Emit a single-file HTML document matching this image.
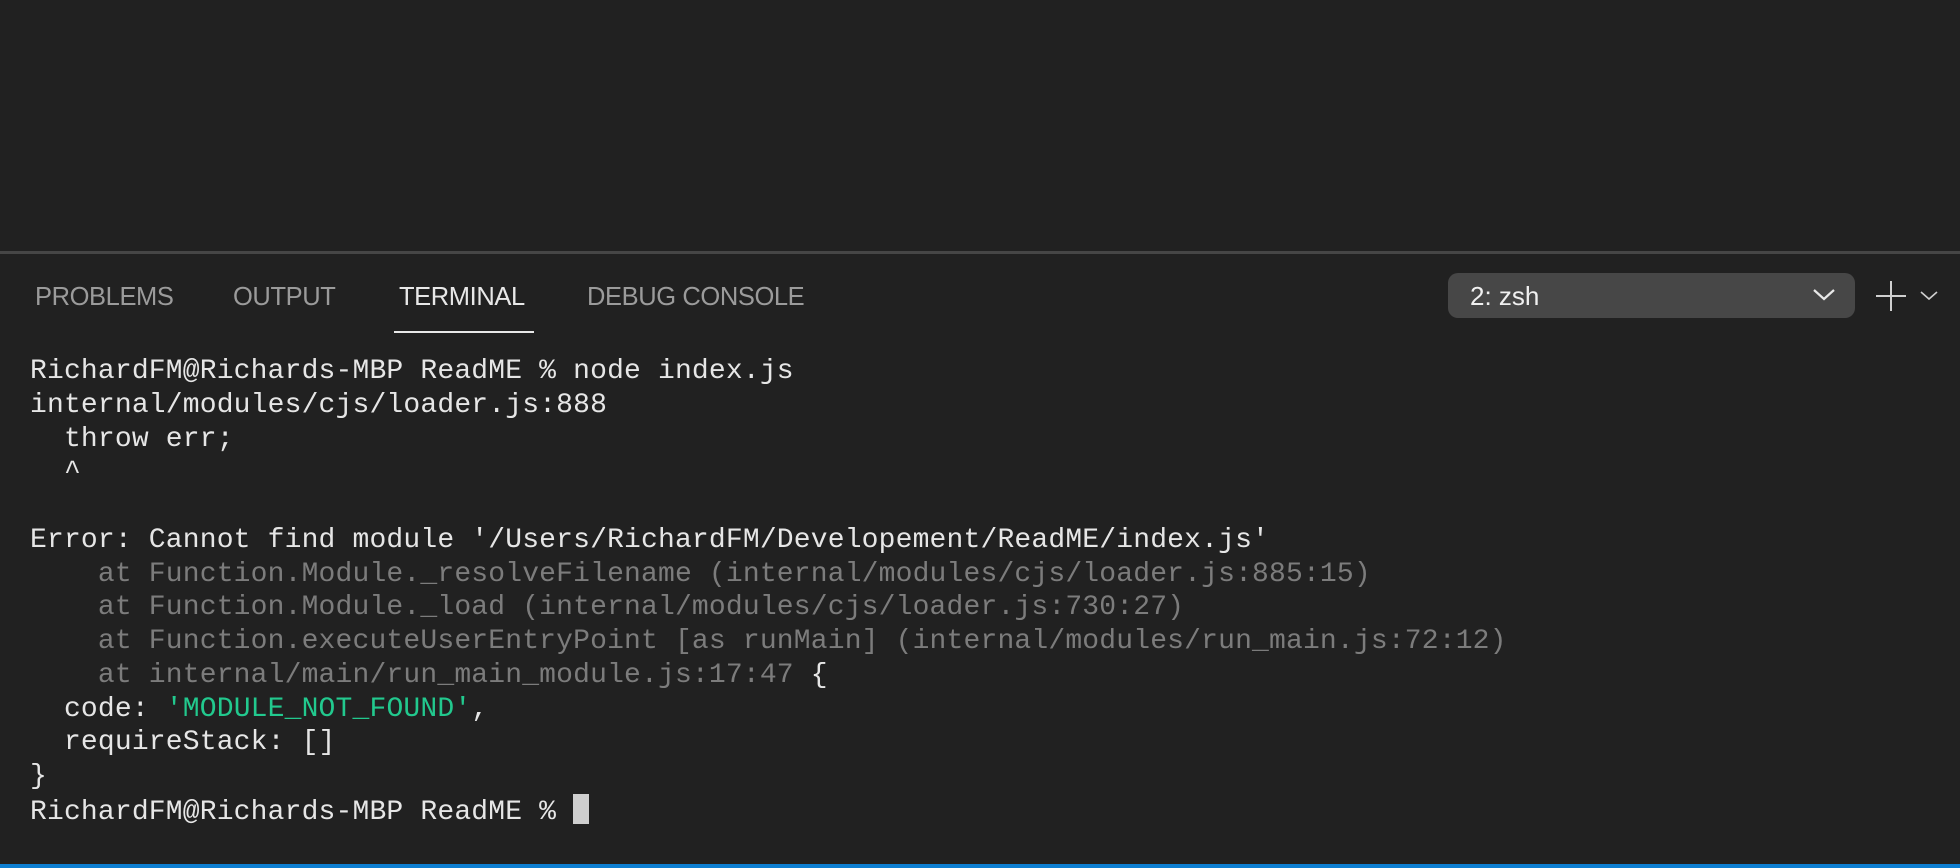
<!DOCTYPE html>
<html><head><meta charset="utf-8"><style>
html,body{margin:0;padding:0;width:1960px;height:868px;background:#212121;overflow:hidden}
body{position:relative;font-family:"Liberation Sans",sans-serif}
.sep{position:absolute;left:0;top:251px;width:1960px;height:3px;background:#464646}
.tab{position:absolute;top:281px;font-size:25.5px;color:#9b9b9b;line-height:32px;letter-spacing:-0.4px}
.ul{position:absolute;left:394px;top:331px;width:140px;height:2px;background:#e8e8e8}
.dd{position:absolute;left:1448px;top:273px;width:407px;height:45px;background:#474747;border-radius:10px}
.dd span{position:absolute;left:22px;top:7px;font-size:26px;color:#f0f0f0;line-height:32px}
.term{position:absolute;left:30px;top:355px;font-family:"Liberation Mono",monospace;font-size:28px;letter-spacing:0.17px;line-height:33.75px;color:#e6e6e6;white-space:pre}
.g{color:#7c7c7c}.gr{color:#22c98e}
.cur{display:inline-block;width:16px;height:30px;background:#cfcfcf;vertical-align:-5px}
.blue{position:absolute;left:0;top:864px;width:1960px;height:4px;background:#0e7fd1}
</style></head><body>
<div class="sep"></div>
<div class="tab" style="left:35px">PROBLEMS</div>
<div class="tab" style="left:233px">OUTPUT</div>
<div class="tab" style="left:399px;color:#e8e8e8">TERMINAL</div>
<div class="tab" style="left:587px">DEBUG CONSOLE</div>
<div class="ul"></div>
<div class="dd"><span>2: zsh</span>
<svg style="position:absolute;left:364px;top:15px" width="24" height="14" viewBox="0 0 24 14"><path d="M2 2 L12 11 L22 2" fill="none" stroke="#e8e8e8" stroke-width="2.2"/></svg></div>
<svg style="position:absolute;left:1875px;top:280px" width="32" height="32" viewBox="0 0 32 32"><path d="M16 1V31M1 16H31" stroke="#d0d0d0" stroke-width="2"/></svg>
<svg style="position:absolute;left:1920px;top:290px" width="18" height="12" viewBox="0 0 18 12"><path d="M1 2 L9 9 L17 2" fill="none" stroke="#cfcfcf" stroke-width="1.6"/></svg>
<div class="term">RichardFM@Richards-MBP ReadME % node index.js
internal/modules/cjs/loader.js:888
  throw err;
  ^

Error: Cannot find module '/Users/RichardFM/Developement/ReadME/index.js'
<span class="g">    at Function.Module._resolveFilename (internal/modules/cjs/loader.js:885:15)</span>
<span class="g">    at Function.Module._load (internal/modules/cjs/loader.js:730:27)</span>
<span class="g">    at Function.executeUserEntryPoint [as runMain] (internal/modules/run_main.js:72:12)</span>
<span class="g">    at internal/main/run_main_module.js:17:47</span> {
  code: <span class="gr">'MODULE_NOT_FOUND'</span>,
  requireStack: []
}
RichardFM@Richards-MBP ReadME % <span class="cur"></span></div>
<div class="blue"></div>
</body></html>
